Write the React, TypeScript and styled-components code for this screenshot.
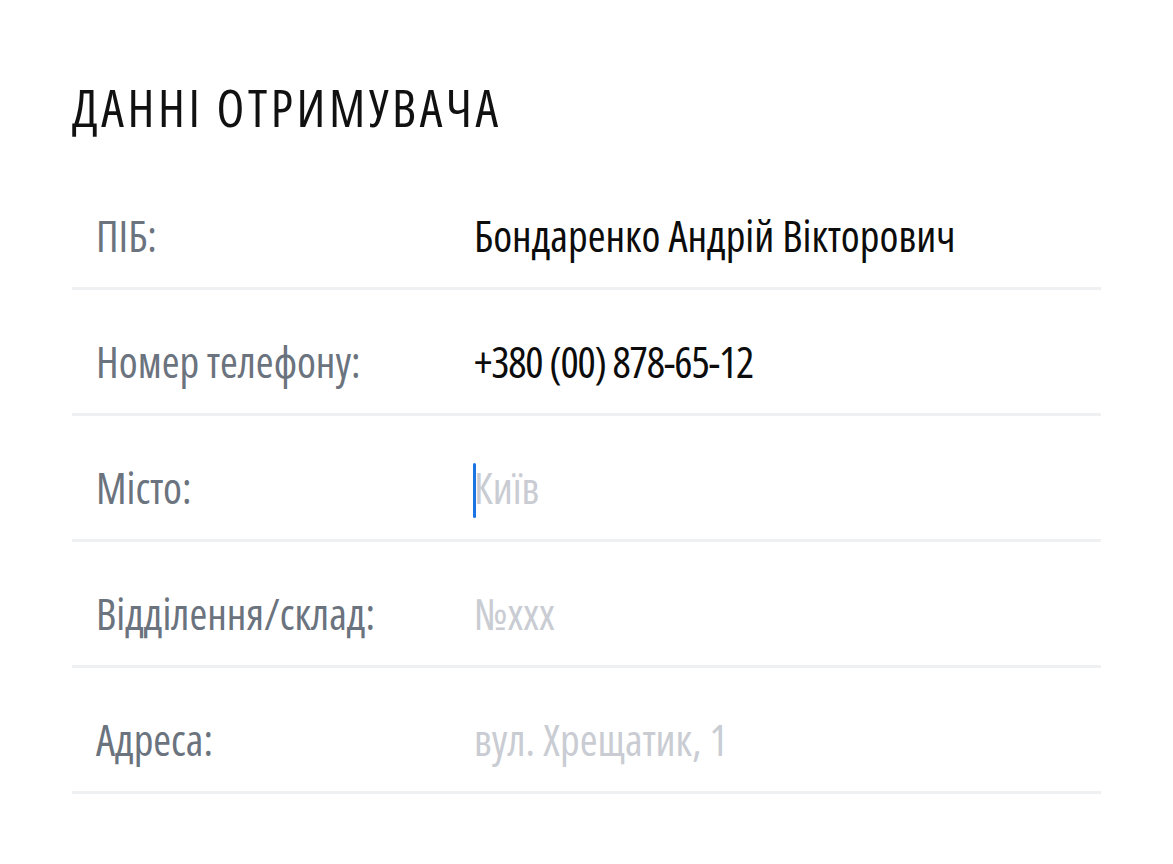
import React from "react";
import styled, { createGlobalStyle } from "styled-components";

const Global = createGlobalStyle`
  html, body { margin: 0; padding: 0; background: #ffffff; }
  body {
    font-family: "Open Sans", "Noto Sans", sans-serif;
    font-stretch: 75%;
  }
`;

const Page = styled.div`
  width: 1173px;
  height: 864px;
  box-sizing: border-box;
  padding: 73px 72px 0 72px;
  display: flex;
  flex-direction: column;
`;

const Title = styled.h1`
  margin: 0 0 23px 0;
  font-size: 51px;
  line-height: 68px;
  font-weight: 400;
  letter-spacing: 3.6px;
  color: #111111;
`;

const List = styled.div`
  display: flex;
  flex-direction: column;
  width: 1029px;
`;

const Row = styled.div`
  box-sizing: border-box;
  display: grid;
  grid-template-columns: 378px 1fr;
  align-items: start;
  height: 126px;
  padding: 42px 0 0 24px;
  border-bottom: 3px solid #eff0f2;
`;

const Label = styled.div`
  font-size: 43px;
  line-height: 60px;
  color: #6b737e;
  white-space: nowrap;
`;

const Value = styled.div<{ $placeholder?: boolean; $numeric?: boolean }>`
  position: relative;
  font-size: 43px;
  line-height: 60px;
  white-space: nowrap;
  letter-spacing: ${(p) => (p.$numeric ? "-1.2px" : "0")};
  color: ${(p) => (p.$placeholder ? "#c9ccd2" : "#0c0c0c")};
`;

const Caret = styled.span`
  position: absolute;
  left: -1px;
  top: 5px;
  width: 3px;
  height: 55px;
  border-radius: 1.5px;
  background: #1b74e4;
`;

type Field = {
  label: string;
  value: string;
  placeholder?: boolean;
  focused?: boolean;
  numeric?: boolean;
};

const fields: Field[] = [
  { label: "ПІБ:", value: "Бондаренко Андрій Вікторович" },
  { label: "Номер телефону:", value: "+380 (00) 878-65-12", numeric: true },
  { label: "Місто:", value: "Київ", placeholder: true, focused: true },
  { label: "Відділення/склад:", value: "№xxx", placeholder: true },
  { label: "Адреса:", value: "вул. Хрещатик, 1", placeholder: true },
];

export default function App() {
  return (
    <>
      <Global />
      <Page>
        <Title>ДАННІ ОТРИМУВАЧА</Title>
        <List>
          {fields.map((f) => (
            <Row key={f.label}>
              <Label>{f.label}</Label>
              <Value $placeholder={f.placeholder} $numeric={f.numeric}>
                {f.focused && <Caret />}
                {f.value}
              </Value>
            </Row>
          ))}
        </List>
      </Page>
    </>
  );
}
